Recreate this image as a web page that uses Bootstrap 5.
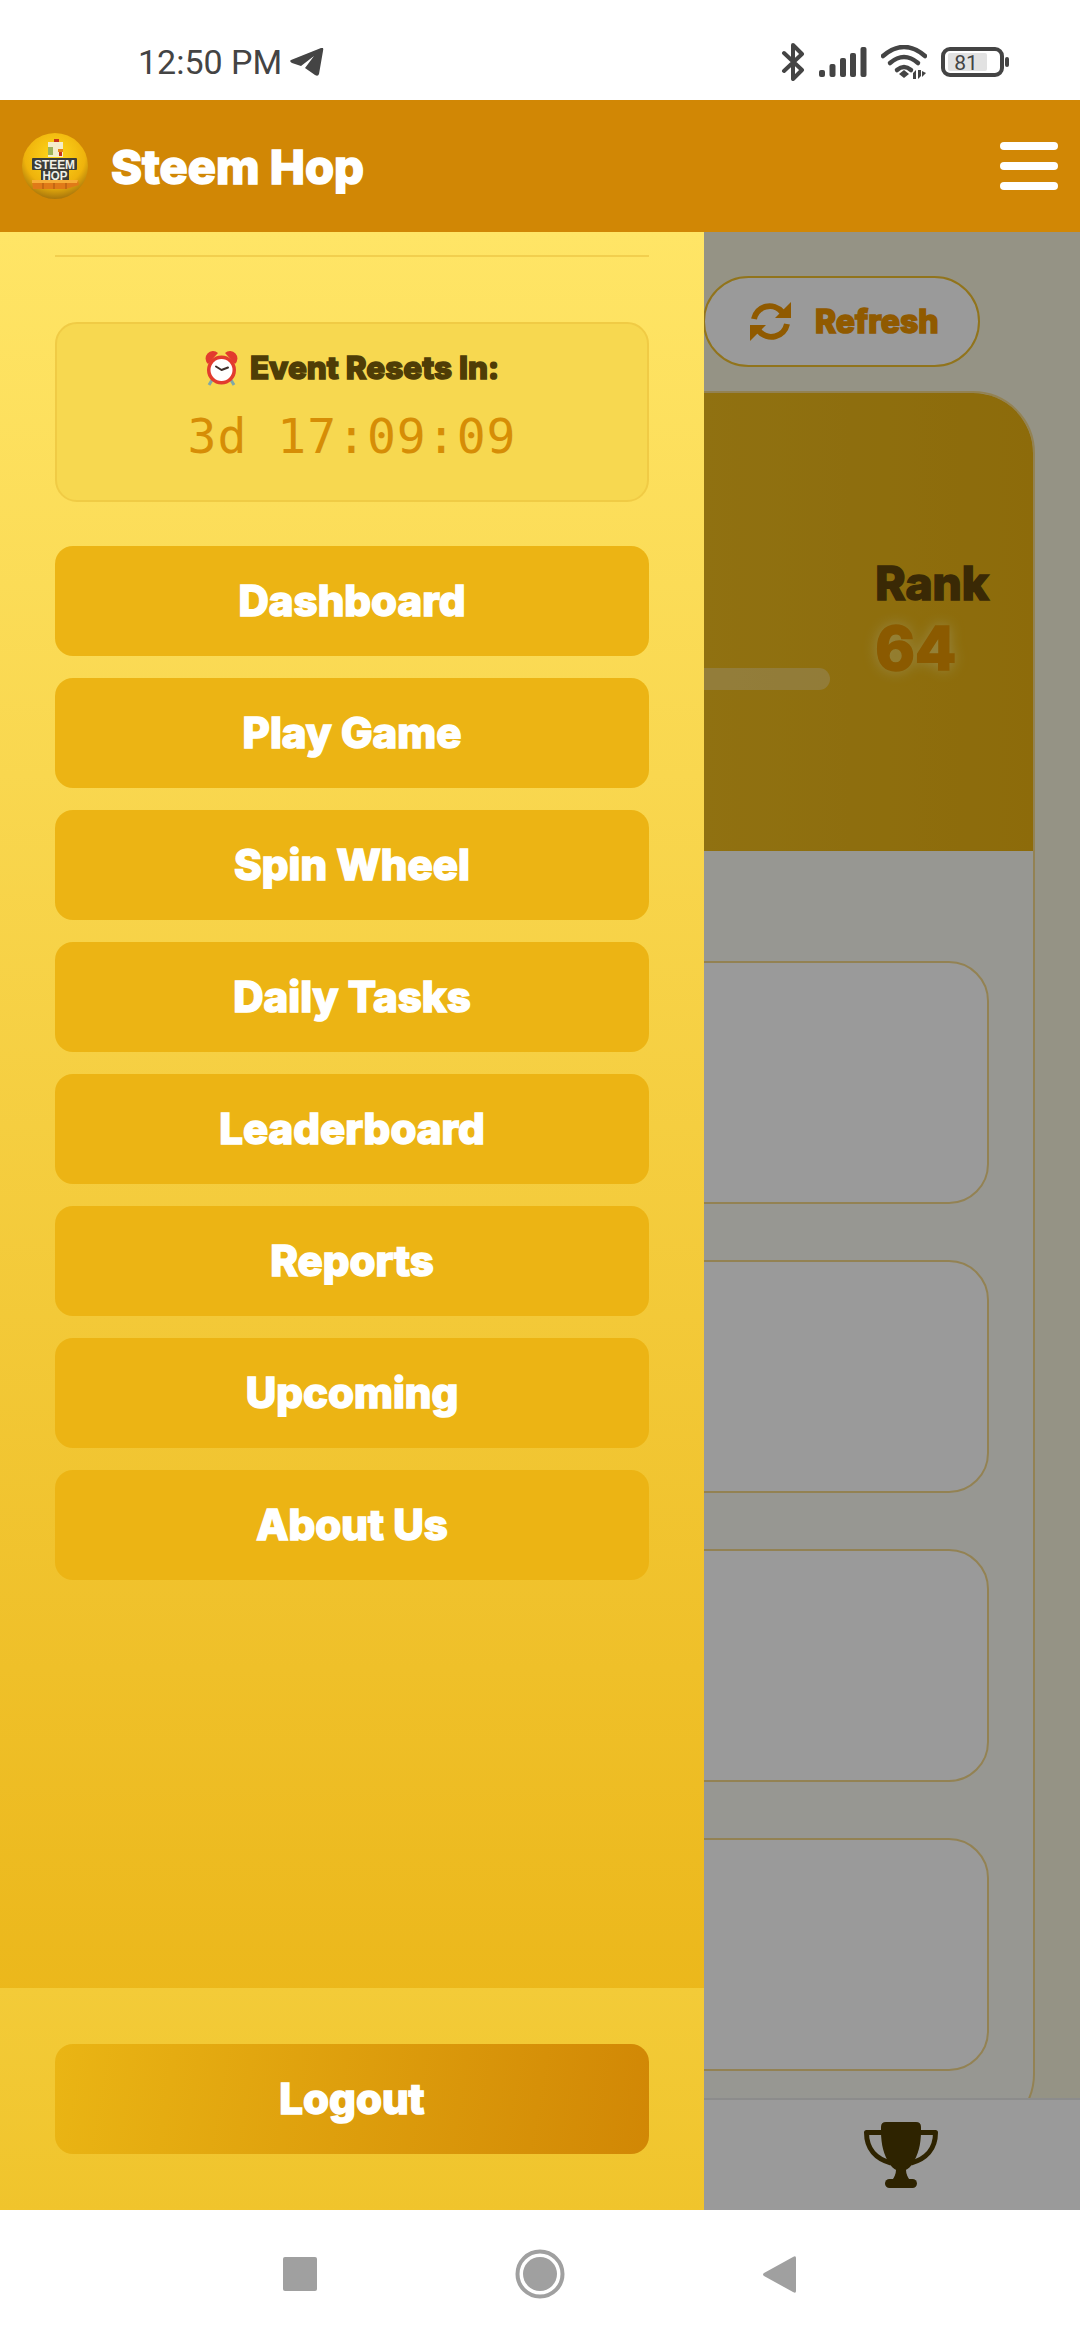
<!DOCTYPE html>
<html lang="en">
<head>
    <meta charset="UTF-8">
    <meta name="viewport" content="width=device-width, initial-scale=1.0">
    <title>Steem Hop</title>
    <link rel="stylesheet" href="https://cdn.jsdelivr.net/npm/bootstrap@5.3.0/dist/css/bootstrap.min.css">
    <style>
        html, body {
            width: 1080px;
            height: 2340px;
            overflow: hidden;
        }

        body {
            background: #fff;
            font-family: "Inter", "Liberation Sans", sans-serif;
        }

        .round-type {
            font-family: "Inter", "Liberation Sans", sans-serif;
            font-weight: 800;
            -webkit-text-stroke: 1.5px currentColor;
        }

        /* phone bars */
        .status-strip {
            height: 100px;
            padding: 24px 71px 0 138px;
            color: #444;
        }

        .status-time {
            font-family: Roboto, "Liberation Sans", sans-serif;
            font-size: 34px;
            line-height: 1;
        }

        .status-icons {
            gap: 14px;
        }

        .soft-keys {
            height: 130px;
            gap: 198px;
            padding-left: 283px;
            padding-bottom: 2px;
        }

        /* app header */
        .app-header {
            height: 132px;
            background: #d18705;
            padding: 0 22px;
        }

        .app-title {
            font-size: 47px;
            line-height: 1;
            color: #fff;
            margin-left: 23px;
        }

        .burger {
            width: 58px;
            gap: 12px;
        }

        .burger span {
            height: 8px;
            border-radius: 4px;
            background: #fff;
        }

        /* page behind the drawer */
        .app-body {
            height: 1978px;
            background: #f7f3dc;
        }

        .page-scroll {
            height: 1866px;
            overflow: hidden;
            padding: 44px 45px 0;
        }

        .refresh-pill {
            width: 277px;
            height: 91px;
            margin-right: 55px;
            gap: 24px;
            padding-left: 45px;
            border: 2px solid #f1c02f;
            border-radius: 46px;
            background: #fff;
            color: #ee9600;
            font-size: 32px;
        }

        .score-card {
            margin-top: 24px;
            height: 1745px;
            border: 2px solid #f3d88a;
            border-radius: 62px;
            background: #fbfaf2;
            overflow: hidden;
        }

        .score-head {
            height: 458px;
            padding: 0 44px 0 46px;
            background: linear-gradient(90deg, #f9cd33, #e9b212);
        }

        .score-bar {
            height: 22px;
            margin-top: 114px;
            margin-right: 45px;
            border-radius: 11px;
            background: rgba(255, 255, 255, .3);
        }

        .rank-block {
            margin-bottom: 8px;
        }

        .rank-label {
            font-size: 46px;
            line-height: 60px;
            color: #604509;
        }

        .rank-value {
            font-size: 60px;
            line-height: 70px;
            color: #e69600;
            text-shadow: 0 0 14px rgba(255, 240, 150, .8);
        }

        .score-list {
            padding: 110px 44px 0;
            gap: 56px;
        }

        .score-item {
            height: 233px;
            border: 2px solid #f3d88a;
            border-radius: 40px;
            background: #fff;
        }

        .score-item.first-item {
            height: 243px;
        }

        .tab-strip {
            height: 112px;
            background: #fff;
            border-top: 2px solid #e8e8e8;
            padding-left: 864px;
        }

        .scrim {
            position: absolute;
            inset: 0;
            background: rgba(0, 0, 0, .395);
        }

        /* drawer */
        .side-drawer {
            position: absolute;
            top: 0;
            left: 0;
            bottom: 0;
            width: 704px;
            background: linear-gradient(180deg, #ffe566, #e9b212);
        }

        .drawer-main {
            padding: 23px 55px 0;
        }

        .drawer-rule {
            height: 2px;
            background: #f2cf4e;
        }

        .timer-box {
            height: 180px;
            margin-top: 65px;
            border: 2px solid #f0cb45;
            border-radius: 22px;
            background: #f7d850;
            padding-top: 25px;
        }

        .timer-label {
            gap: 12px;
            color: #4f3d06;
            font-size: 31.5px;
            line-height: 38px;
        }

        .timer-value {
            font-family: "DejaVu Sans Mono", "Liberation Mono", monospace;
            font-size: 48px;
            line-height: 58px;
            letter-spacing: 1px;
            color: #d68d06;
            margin-top: 20px;
        }

        .drawer-menu {
            margin-top: 44px;
            gap: 22px;
        }

        .drawer-link {
            height: 110px;
            border: 0;
            border-radius: 18px;
            background: #ecb414;
            color: #fff;
            font-size: 42px;
            line-height: 110px;
            padding: 0;
        }

        .drawer-foot {
            height: 222px;
            padding: 56px 55px 0;
            background: linear-gradient(180deg, #f3cb38, #f0c42c);
        }

        .logout-btn {
            background: linear-gradient(100deg, #eab514, #d18705);
        }
    </style>
</head>
<body>

    <div class="status-strip d-flex justify-content-between align-items-center">
        <div class="d-flex align-items-center">
            <span class="status-time">12:50 PM</span>
            <svg class="ms-2" width="34" height="29" viewBox="0 0 34 29" fill="#444"><path d="M1 12 31 0Q34-1 33 3L29 26Q28 29 25 27L15 20 24 8 11 18 2 15Q-1 13 1 12Z"/></svg>
        </div>
        <div class="status-icons d-flex align-items-center">
            <svg width="24" height="38" viewBox="0 0 24 38" fill="none" stroke="#444" stroke-width="4" stroke-linecap="round" stroke-linejoin="round"><path d="M3 10 21 27 12 36V2L21 11 3 28"/></svg>
            <svg width="48" height="30" viewBox="0 0 48 30" fill="#444"><rect x="0" y="23" width="6" height="7" rx="2"/><rect x="10.5" y="17" width="6" height="13" rx="2"/><rect x="21" y="11" width="6" height="19" rx="2"/><rect x="31" y="6" width="6" height="24" rx="2"/><rect x="41.5" y="0" width="6" height="30" rx="2"/></svg>
            <svg width="46" height="34" viewBox="0 0 46 34"><g fill="none" stroke="#444" stroke-width="4.5" stroke-linecap="round"><path d="M2 11Q23-7 44 11"/><path d="M9 18Q23 6 37 18"/><path d="M16 25Q23 19 30 25"/></g><path d="M18 29 23 25 28 29 23 33Z" fill="#444"/><path d="M32 28V34H35V25ZM37 25V34L40 31V25ZM41 26V32L45 28Z" fill="#444"/></svg>
            <svg width="68" height="30" viewBox="0 0 68 30"><rect x="2" y="2" width="59" height="26" rx="7" fill="none" stroke="#444" stroke-width="4"/><rect x="7" y="6" width="39" height="18" rx="2" fill="#e2e2e2"/><rect x="64" y="10" width="4" height="10" rx="2" fill="#444"/><text x="25" y="23" text-anchor="middle" font-family="Roboto, sans-serif" font-size="21" fill="#444">81</text></svg>
        </div>
    </div>

    <header class="app-header d-flex align-items-center justify-content-between">
        <div class="d-flex align-items-center">
            <svg width="66" height="66" viewBox="0 0 66 66">
                <defs><radialGradient id="logoBall" cx="50%" cy="35%" r="65%"><stop offset="0" stop-color="#ffd91c"/><stop offset=".7" stop-color="#efb30c"/><stop offset="1" stop-color="#a8760c"/></radialGradient></defs>
                <circle cx="33" cy="33" r="33" fill="url(#logoBall)"/>
                <rect x="32" y="6" width="5" height="4" fill="#c8321c"/>
                <rect x="26" y="9" width="15" height="15" fill="#f4eecb"/>
                <rect x="26" y="14" width="5" height="8" fill="#9db35a"/>
                <rect x="36" y="16" width="5" height="3" fill="#e8861a"/>
                <rect x="37" y="19" width="3" height="4" fill="#c8321c"/>
                <rect x="10" y="25" width="45" height="12" rx="1" fill="#3d3d38"/>
                <rect x="19" y="36" width="28" height="12" rx="1" fill="#3d3d38"/>
                <text x="32.500" y="35.500" text-anchor="middle" font-family="Liberation Sans, sans-serif" font-weight="700" font-size="12" textLength="41" lengthAdjust="spacingAndGlyphs" fill="#f1f0e6">STEEM</text>
                <text x="33" y="46.500" text-anchor="middle" font-family="Liberation Sans, sans-serif" font-weight="700" font-size="12" textLength="25" lengthAdjust="spacingAndGlyphs" fill="#f1f0e6">HOP</text>
                <path d="M10 47H56L57 52 44 56H11Z" fill="#e07a18"/>
                <path d="M10 47H56L55 50H10Z" fill="#f7ae38"/>
                <path d="M21 50V56M32 50V56M44 50V56" stroke="#a8560f" stroke-width="1"/>
            </svg>
            <span class="app-title round-type">Steem Hop</span>
        </div>
        <div class="burger d-flex flex-column"><span></span><span></span><span></span></div>
    </header>

    <div class="app-body position-relative">
        <div class="page-scroll">
            <div class="d-flex justify-content-end">
                <div class="refresh-pill d-flex align-items-center round-type">
                    <svg width="41" height="39" viewBox="0 0 41 39" fill="none"><path d="M4 17A16 16 0 0 1 32 10" stroke="currentColor" stroke-width="6"/><path d="M37 22A16 16 0 0 1 9 29" stroke="currentColor" stroke-width="6"/><path d="M41 0V16H25Z" fill="currentColor"/><path d="M0 39V23H16Z" fill="currentColor"/></svg>
                    <span>Refresh</span>
                </div>
            </div>
            <div class="score-card">
                <div class="score-head d-flex align-items-center">
                    <div class="flex-grow-1"><div class="score-bar"></div></div>
                    <div class="rank-block round-type">
                        <div class="rank-label">Rank</div>
                        <div class="rank-value">64</div>
                    </div>
                </div>
                <div class="score-list d-flex flex-column">
                    <div class="score-item first-item"></div>
                    <div class="score-item"></div>
                    <div class="score-item"></div>
                    <div class="score-item"></div>
                </div>
            </div>
        </div>
        <div class="tab-strip d-flex align-items-center">
            <svg width="74" height="66" viewBox="0 0 74 66" fill="#4d3b00"><path d="M22 0H52Q57 0 57 5V9C57 23 54 33 49 41 46 46 43 47 42 48 42 52 44 56 46 58H28C30 56 32 52 32 48 31 47 28 46 25 41 20 33 17 23 17 9V5Q17 0 22 0Z"/><path d="M18 10.500H2.500C2.500 27 12 37 27 41M56 10.500H71.500C71.500 27 62 37 47 41" fill="none" stroke="#4d3b00" stroke-width="5" stroke-linejoin="round"/><rect x="21" y="57" width="32" height="9" rx="4.500"/></svg>
        </div>
        <div class="scrim"></div>

        <aside class="side-drawer d-flex flex-column">
            <div class="drawer-main flex-grow-1">
                <div class="drawer-rule"></div>
                <div class="timer-box text-center">
                    <div class="timer-label round-type d-flex justify-content-center align-items-center">
                        <svg width="33" height="36" viewBox="0 0 33 36"><path d="M3 14A7 7 0 0 1 13 3ZM30 14A7 7 0 0 0 20 3Z" fill="#e23b2e"/><path d="M7 30 4 35M26 30 29 35" stroke="#7fa8a8" stroke-width="3"/><circle cx="16.500" cy="20" r="14.500" fill="#e23b2e"/><circle cx="16.500" cy="20" r="11" fill="#fff"/><path d="M16.500 20 11 16.500M16.500 20 23 17.500" stroke="#40302c" stroke-width="2" stroke-linecap="round"/></svg>
                        <span>Event Resets In:</span>
                    </div>
                    <div class="timer-value">3d 17:09:09</div>
                </div>
                <nav class="drawer-menu d-flex flex-column">
                    <a class="btn drawer-link round-type" href="#">Dashboard</a>
                    <a class="btn drawer-link round-type" href="#">Play Game</a>
                    <a class="btn drawer-link round-type" href="#">Spin Wheel</a>
                    <a class="btn drawer-link round-type" href="#">Daily Tasks</a>
                    <a class="btn drawer-link round-type" href="#">Leaderboard</a>
                    <a class="btn drawer-link round-type" href="#">Reports</a>
                    <a class="btn drawer-link round-type" href="#">Upcoming</a>
                    <a class="btn drawer-link round-type" href="#">About Us</a>
                </nav>
            </div>
            <div class="drawer-foot">
                <a class="btn drawer-link logout-btn round-type d-block" href="#">Logout</a>
            </div>
        </aside>
    </div>

    <div class="soft-keys d-flex align-items-center">
        <svg width="34" height="34" viewBox="0 0 34 34" fill="#a0a0a0"><rect width="34" height="34" rx="2"/></svg>
        <svg width="50" height="50" viewBox="0 0 50 50"><circle cx="25" cy="25" r="22.500" fill="none" stroke="#a0a0a0" stroke-width="4"/><circle cx="25" cy="25" r="17" fill="#a0a0a0"/></svg>
        <svg width="33" height="37" viewBox="0 0 33 37" fill="#a0a0a0"><path d="M33 2V35Q33 38 30 36L1 20Q-1 18.500 1 17L30 1Q33-1 33 2Z"/></svg>
    </div>

    <script src="https://cdn.jsdelivr.net/npm/bootstrap@5.3.0/dist/js/bootstrap.bundle.min.js"></script>
</body>
</html>
